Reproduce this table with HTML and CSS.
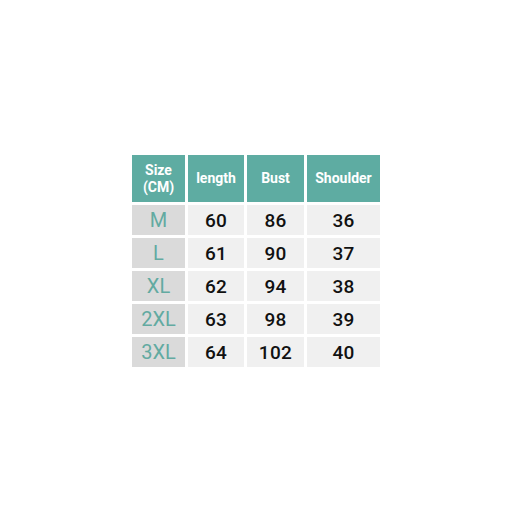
FILE: index.html
```html
<!DOCTYPE html>
<html>
<head>
<meta charset="utf-8">
<link rel="stylesheet" href="styles.css">
</head>
<body>
<div class="page">
  <div class="chart">
    <div class="cell head">Size<br>(CM)</div>
    <div class="cell head">length</div>
    <div class="cell head">Bust</div>
    <div class="cell head">Shoulder</div>

    <div class="cell size">M</div>
    <div class="cell val">60</div>
    <div class="cell val">86</div>
    <div class="cell val">36</div>

    <div class="cell size">L</div>
    <div class="cell val">61</div>
    <div class="cell val">90</div>
    <div class="cell val">37</div>

    <div class="cell size">XL</div>
    <div class="cell val">62</div>
    <div class="cell val">94</div>
    <div class="cell val">38</div>

    <div class="cell size">2XL</div>
    <div class="cell val">63</div>
    <div class="cell val">98</div>
    <div class="cell val">39</div>

    <div class="cell size">3XL</div>
    <div class="cell val">64</div>
    <div class="cell val">102</div>
    <div class="cell val">40</div>
  </div>
</div>
</body>
</html>
```

FILE: styles.css
```css
html, body {
  margin: 0;
  padding: 0;
  background: #ffffff;
}

.page {
  width: 518px;
  height: 518px;
  padding: 155px 0 0 132px;
  box-sizing: border-box;
}

.chart {
  display: grid;
  grid-template-columns: 53px 56px 57px 73px;
  grid-template-rows: 47px repeat(5, 30px);
  column-gap: 3px;
  row-gap: 3px;
  width: 248px;
  font-family: Roboto, "DejaVu Sans", sans-serif;
}

.cell {
  display: flex;
  align-items: center;
  justify-content: center;
  text-align: center;
}

.head {
  background: #5eaca2;
  color: #ffffff;
  font-weight: 700;
  font-size: 14px;
  line-height: 17px;
}

.size {
  background: #dadada;
  color: #62aaa1;
  font-size: 20px;
  font-weight: 400;
}

.val {
  background: #f0f0f0;
  color: #111111;
  font-size: 19px;
  font-weight: 500;
  letter-spacing: 0.3px;
}
```
